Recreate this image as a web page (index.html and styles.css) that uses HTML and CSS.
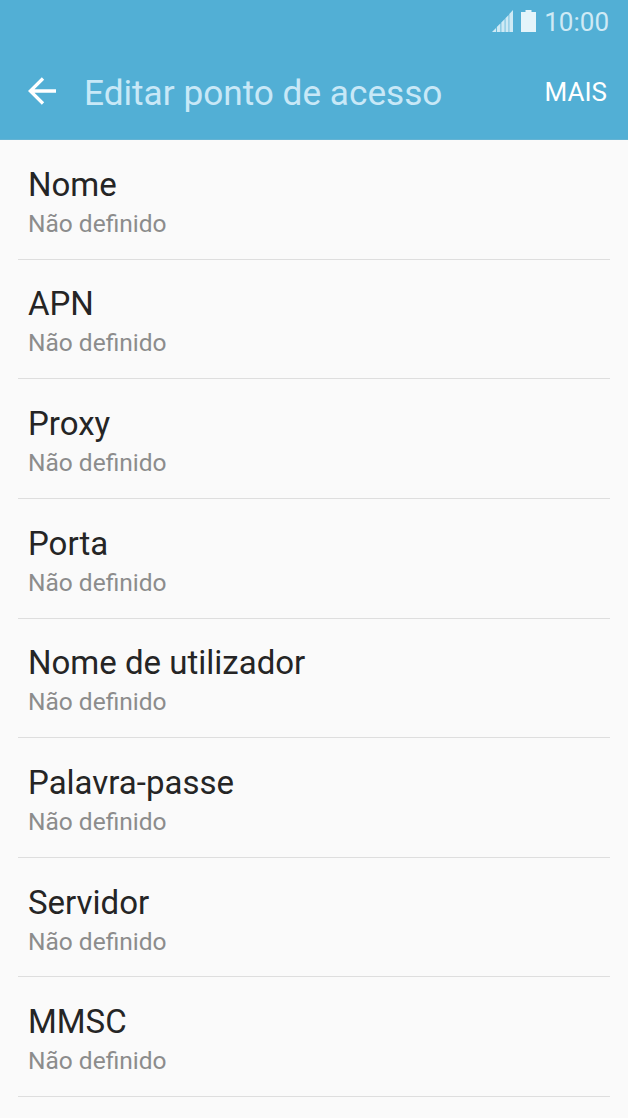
FILE: index.html
```html
<!doctype html>
<html lang="pt">
<head>
    <meta charset="UTF-8">
    <meta name="viewport" content="width=device-width, initial-scale=1.0">
    <title>Editar ponto de acesso</title>
    <link rel="stylesheet" href="styles.css">
</head>
<body>

<header class="header">
    <div class="status-bar">
        <svg class="signal" width="21" height="22" viewBox="0 0 21 22">
            <path d="M0 22L4 18V22zM4.800 22V17L8.500 13.300V22zM9.300 22V12.500L12.700 9V22zM13.400 22V8.300L16.600 5V22zM17.300 22V4L21 0V22z"/>
        </svg>
        <svg class="battery" width="15" height="22" viewBox="0 0 15 22">
            <path d="M4.500 0h6v2H15v20H0V2h4.500z"/>
        </svg>
        <span class="clock">10:00</span>
    </div>
    <div class="toolbar">
        <svg class="back" width="28" height="28" viewBox="0 0 28 28">
            <path d="M15 1.500L2.300 14 15 26.500M2.300 14H28"/>
        </svg>
        <h1 class="title">Editar ponto de acesso</h1>
        <span class="more">MAIS</span>
    </div>
</header>

<ul class="list">
    <li><span class="name">Nome</span><span class="value">Não definido</span></li>
    <li><span class="name">APN</span><span class="value">Não definido</span></li>
    <li><span class="name">Proxy</span><span class="value">Não definido</span></li>
    <li><span class="name">Porta</span><span class="value">Não definido</span></li>
    <li><span class="name">Nome de utilizador</span><span class="value">Não definido</span></li>
    <li><span class="name">Palavra-passe</span><span class="value">Não definido</span></li>
    <li><span class="name">Servidor</span><span class="value">Não definido</span></li>
    <li><span class="name">MMSC</span><span class="value">Não definido</span></li>
</ul>

</body>
</html>
```
FILE: styles.css
```css
body {
    margin: 0;
    height: 1118px;
    overflow: hidden;
    background: #fafafa;
    font-family: Roboto, "Liberation Sans", sans-serif;
}
.header {
    height: 140px;
    box-sizing: border-box;
    background: #52afd5;
    border-bottom: 1px solid #65b3d3;
}
.status-bar {
    display: flex;
    justify-content: flex-end;
    align-items: center;
    height: 43px;
    padding-right: 19px;
}
.status-bar svg {
    position: relative;
    top: -1px;
}
.signal {
    margin-right: 8px;
    fill: #cfeaf5;
}
.battery {
    margin-right: 8px;
    fill: #e4f4fa;
}
.clock {
    font-size: 26px;
    color: #cfeaf5;
}
.toolbar {
    display: flex;
    align-items: center;
    height: 96px;
    padding: 0 21px 0 28px;
}
.back {
    fill: none;
    stroke: #fff;
    stroke-width: 3.3;
}
.title {
    flex: 1;
    margin: 3px 0 0 28px;
    font-size: 35.2px;
    font-weight: 400;
    color: #c8e8f7;
}
.more {
    font-size: 26px;
    line-height: 30px;
    padding-top: 1px;
    color: #fff;
}
.list {
    margin: 0;
    padding: 0 18px;
    list-style: none;
}
.list li {
    height: 119.63px;
    box-sizing: border-box;
    padding: 24.8px 10px 0;
    border-bottom: 1px solid #dedede;
}
.name,
.value {
    display: block;
}
.name {
    font-size: 33px;
    line-height: 40px;
    color: #252525;
}
.value {
    font-size: 24.5px;
    line-height: 37px;
    color: #8c8c8c;
}
```
